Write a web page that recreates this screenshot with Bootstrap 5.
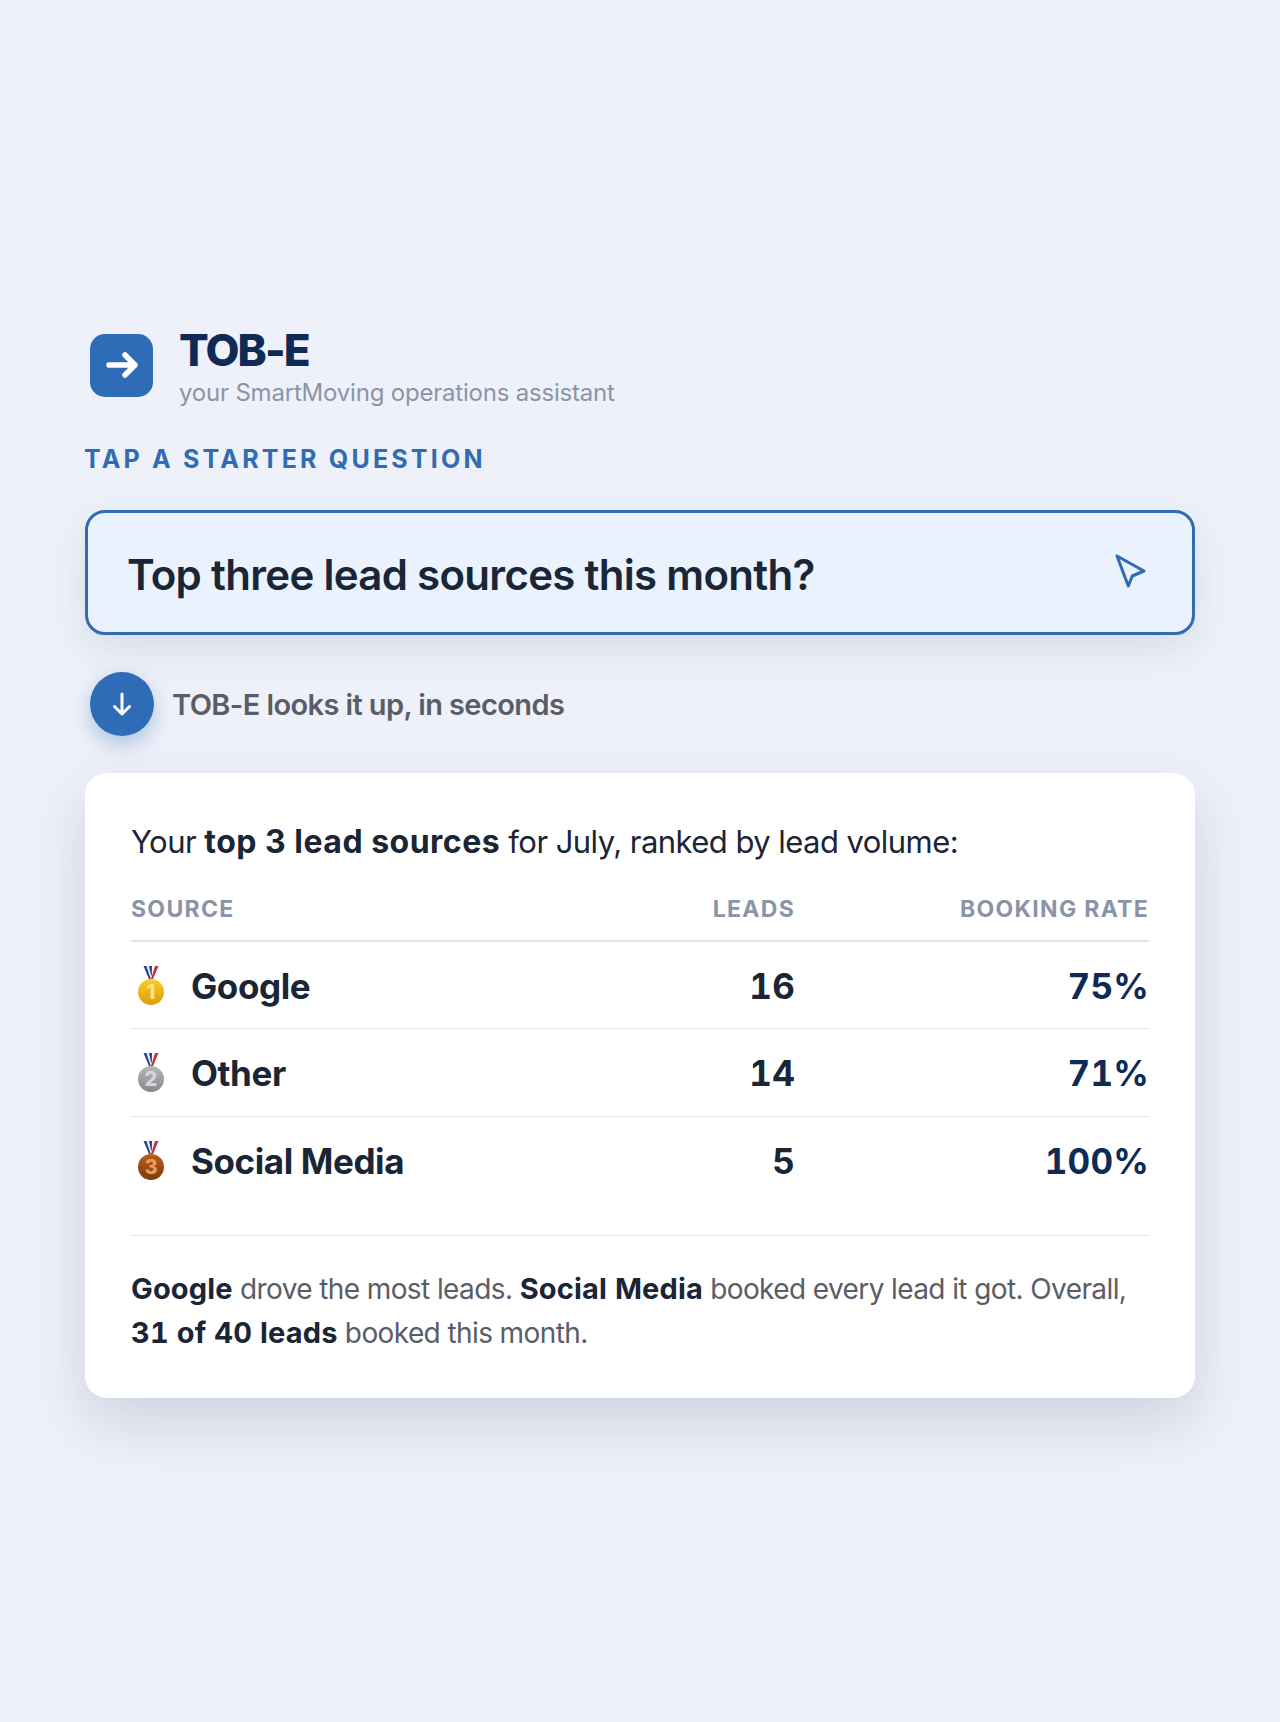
<!DOCTYPE html>
<html lang="en">
<head>
    <meta charset="UTF-8">
    <meta name="viewport" content="width=device-width, initial-scale=1.0">
    <title>TOB-E</title>
    <link href="https://cdn.jsdelivr.net/npm/bootstrap@5.3.0/dist/css/bootstrap.min.css" rel="stylesheet">
    <style>
        body {
            background-color: #eef1f9;
            font-family: "Inter", "Liberation Sans", sans-serif;
            color: #1a2535;
        }

        .page-wrap {
            min-height: 1722px;
            padding: 4px 85px 0;
        }

        .brand-row {
            gap: 27px;
            margin-bottom: 36px;
        }

        .logo-box {
            width: 63px;
            height: 63px;
            margin-left: 5px;
            margin-bottom: 6px;
            background-color: #2f6cb8;
            border-radius: 15px;
        }

        .brand-name {
            margin-left: -1px;
            font-size: 44px;
            font-weight: 800;
            line-height: 44px;
            letter-spacing: -1.9px;
            color: #0f2a56;
        }

        .brand-sub {
            margin-top: 6px;
            margin-left: -1px;
            font-size: 24px;
            line-height: 30px;
            letter-spacing: -0.2px;
            color: #8a94a8;
        }

        .starter-label {
            margin-bottom: 36px;
            margin-left: -1px;
            font-size: 25px;
            font-weight: 700;
            line-height: 30px;
            letter-spacing: 3.2px;
            color: #2f6cb3;
        }

        .question-box {
            height: 125px;
            padding: 3px 45px 0 39px;
            background-color: #e9f2fd;
            border: 3px solid #2f6cb3;
            border-radius: 20px;
            box-shadow: 0 14px 40px rgba(30, 60, 110, 0.11);
            font-size: 42px;
            font-weight: 600;
            letter-spacing: -0.7px;
        }

        .pointer-icon {
            margin-bottom: 6px;
        }

        .step-row {
            gap: 18px;
            margin: 37px 0;
        }

        .step-dot {
            width: 64px;
            height: 64px;
            margin-left: 5px;
            background-color: #2f6cb8;
            box-shadow: 0 8px 20px rgba(47, 108, 184, 0.35);
        }

        .step-text {
            font-size: 29px;
            font-weight: 600;
            letter-spacing: -0.6px;
            color: #5a5d66;
        }

        .answer-card {
            padding: 49px 46px 43px;
            background-color: #fff;
            border-radius: 22px;
            box-shadow: 0 24px 60px rgba(30, 50, 90, 0.16);
        }

        .answer-intro {
            margin-bottom: 33px;
            font-size: 31px;
            line-height: 40px;
            letter-spacing: -0.55px;
        }

        .answer-intro b {
            font-size: 32px;
            font-weight: 700;
            letter-spacing: 0.5px;
        }

        .lead-table {
            --bs-table-bg: transparent;
            margin-bottom: 0;
        }

        .lead-table th {
            padding: 0 0 17px;
            font-size: 23px;
            font-weight: 700;
            line-height: 28px;
            letter-spacing: 1.3px;
            color: #8a94a8;
            border-bottom: 2px solid #dfe3ea;
        }

        .lead-table td {
            height: 87.5px;
            padding: 2px 0 0;
            vertical-align: middle;
            border-bottom: 1px solid #e8eaef;
        }

        .lead-table tr:last-child td {
            border-bottom: 0;
        }

        .rate-col {
            width: 354px;
        }

        .source-cell {
            font-size: 35px;
            font-weight: 700;
            letter-spacing: -0.4px;
            color: #1a2535;
        }

        .medal-wrap {
            gap: 27px;
            padding-left: 7px;
        }

        .medal-wrap svg {
            margin-top: -2px;
        }

        .medal-num {
            font-family: "Inter", sans-serif;
            font-size: 20px;
            font-weight: 800;
            letter-spacing: 0;
        }

        .num-cell, .rate-cell {
            font-size: 35px;
            font-weight: 700;
            font-variant-numeric: tabular-nums;
            letter-spacing: 0.2px;
        }

        .num-cell {
            color: #1a2535;
        }

        .rate-cell {
            color: #0f2a56;
        }

        .answer-foot {
            margin-top: 31px;
            padding-top: 31px;
            border-top: 1px solid #e8eaef;
            font-size: 28px;
            line-height: 44px;
            letter-spacing: -0.6px;
            color: #5a5d66;
        }

        .answer-foot b {
            font-size: 29px;
            font-weight: 700;
            font-variant-numeric: tabular-nums;
            letter-spacing: 0.15px;
            color: #1a2535;
        }
    </style>
</head>
<body>
<div class="page-wrap d-flex flex-column justify-content-center">
    <div class="brand-row d-flex align-items-center">
        <div class="logo-box d-flex align-items-center justify-content-center flex-shrink-0">
            <svg width="34" height="34" viewBox="0 0 34 34" fill="none" stroke="#fff" stroke-width="5.5" stroke-linecap="round" stroke-linejoin="round">
                <path d="M4 17h26M20 7l10 10-10 10"/>
            </svg>
        </div>
        <div>
            <div class="brand-name">TOB-E</div>
            <div class="brand-sub">your SmartMoving operations assistant</div>
        </div>
    </div>

    <div class="starter-label">TAP A STARTER QUESTION</div>

    <div class="question-box d-flex align-items-center justify-content-between">
        <span>Top three lead sources this month?</span>
        <svg class="pointer-icon" width="33" height="36" viewBox="0 0 33 36" fill="none" stroke="#2f6cb3" stroke-width="3" stroke-linecap="round" stroke-linejoin="round">
            <path d="M3 3l27 15-11.700 5-4 10z"/>
        </svg>
    </div>

    <div class="step-row d-flex align-items-center">
        <div class="step-dot rounded-circle d-flex align-items-center justify-content-center flex-shrink-0">
            <svg width="24" height="26" viewBox="0 0 24 26" fill="none" stroke="#fff" stroke-width="3" stroke-linecap="round" stroke-linejoin="round">
                <path d="M12 3v20M4.500 15.500l7.500 7.500 7.500-7.500"/>
            </svg>
        </div>
        <div class="step-text">TOB-E looks it up, in seconds</div>
    </div>

    <div class="answer-card">
        <div class="answer-intro">Your <b>top 3 lead sources</b> for July, ranked by lead volume:</div>
        <table class="table lead-table">
            <thead>
            <tr>
                <th>SOURCE</th>
                <th class="text-end">LEADS</th>
                <th class="text-end rate-col">BOOKING RATE</th>
            </tr>
            </thead>
            <tbody>
            <tr>
                <td class="source-cell">
                    <div class="medal-wrap d-flex align-items-center">
                        <svg width="26" height="39" viewBox="0 0 26 39">
                            <defs><linearGradient id="gold" x1="0" y1="0" x2="0" y2="1"><stop offset="0" stop-color="#f7cf2a"/><stop offset="1" stop-color="#dd9c08"/></linearGradient></defs>
                            <path d="M5.500 0h3l4.500 13h-2z" fill="#2b3f8f"/>
                            <path d="M8.500 0h2.500l3 10-1 3z" fill="#e9e9f0"/>
                            <path d="M11 0h3l-.2 10-.8-1z" fill="#2b3f8f"/>
                            <path d="M17 0h3.500l-5.500 13h-2z" fill="#c9303c"/>
                            <circle cx="13" cy="26" r="13" fill="url(#gold)"/>
                            <text class="medal-num" x="13" y="33" text-anchor="middle" fill="#fbe28a">1</text>
                        </svg>
                        <span>Google</span>
                    </div>
                </td>
                <td class="num-cell text-end">16</td>
                <td class="rate-cell text-end">75%</td>
            </tr>
            <tr>
                <td class="source-cell">
                    <div class="medal-wrap d-flex align-items-center">
                        <svg width="26" height="39" viewBox="0 0 26 39">
                            <defs><linearGradient id="silver" x1="0" y1="0" x2="0" y2="1"><stop offset="0" stop-color="#b8b8bb"/><stop offset="1" stop-color="#87878b"/></linearGradient></defs>
                            <path d="M5.500 0h3l4.500 13h-2z" fill="#2b3f8f"/>
                            <path d="M8.500 0h2.500l3 10-1 3z" fill="#e9e9f0"/>
                            <path d="M11 0h3l-.2 10-.8-1z" fill="#2b3f8f"/>
                            <path d="M17 0h3.500l-5.500 13h-2z" fill="#c9303c"/>
                            <circle cx="13" cy="26" r="13" fill="url(#silver)"/>
                            <text class="medal-num" x="13" y="33" text-anchor="middle" fill="#d6d6d9">2</text>
                        </svg>
                        <span>Other</span>
                    </div>
                </td>
                <td class="num-cell text-end">14</td>
                <td class="rate-cell text-end">71%</td>
            </tr>
            <tr>
                <td class="source-cell">
                    <div class="medal-wrap d-flex align-items-center">
                        <svg width="26" height="39" viewBox="0 0 26 39">
                            <defs><linearGradient id="bronze" x1="0" y1="0" x2="0" y2="1"><stop offset="0" stop-color="#b75e1c"/><stop offset="1" stop-color="#7d3a10"/></linearGradient></defs>
                            <path d="M5.500 0h3l4.500 13h-2z" fill="#2b3f8f"/>
                            <path d="M8.500 0h2.500l3 10-1 3z" fill="#e9e9f0"/>
                            <path d="M11 0h3l-.2 10-.8-1z" fill="#2b3f8f"/>
                            <path d="M17 0h3.500l-5.500 13h-2z" fill="#c9303c"/>
                            <circle cx="13" cy="26" r="13" fill="url(#bronze)"/>
                            <text class="medal-num" x="13" y="33" text-anchor="middle" fill="#eb9a52">3</text>
                        </svg>
                        <span>Social Media</span>
                    </div>
                </td>
                <td class="num-cell text-end">5</td>
                <td class="rate-cell text-end">100%</td>
            </tr>
            </tbody>
        </table>
        <div class="answer-foot"><b>Google</b> drove the most leads. <b>Social Media</b> booked every lead it got. Overall, <b>31 of 40 leads</b> booked this month.</div>
    </div>
</div>

<script src="https://cdn.jsdelivr.net/npm/bootstrap@5.3.0/dist/js/bootstrap.bundle.min.js"></script>
</body>
</html>
